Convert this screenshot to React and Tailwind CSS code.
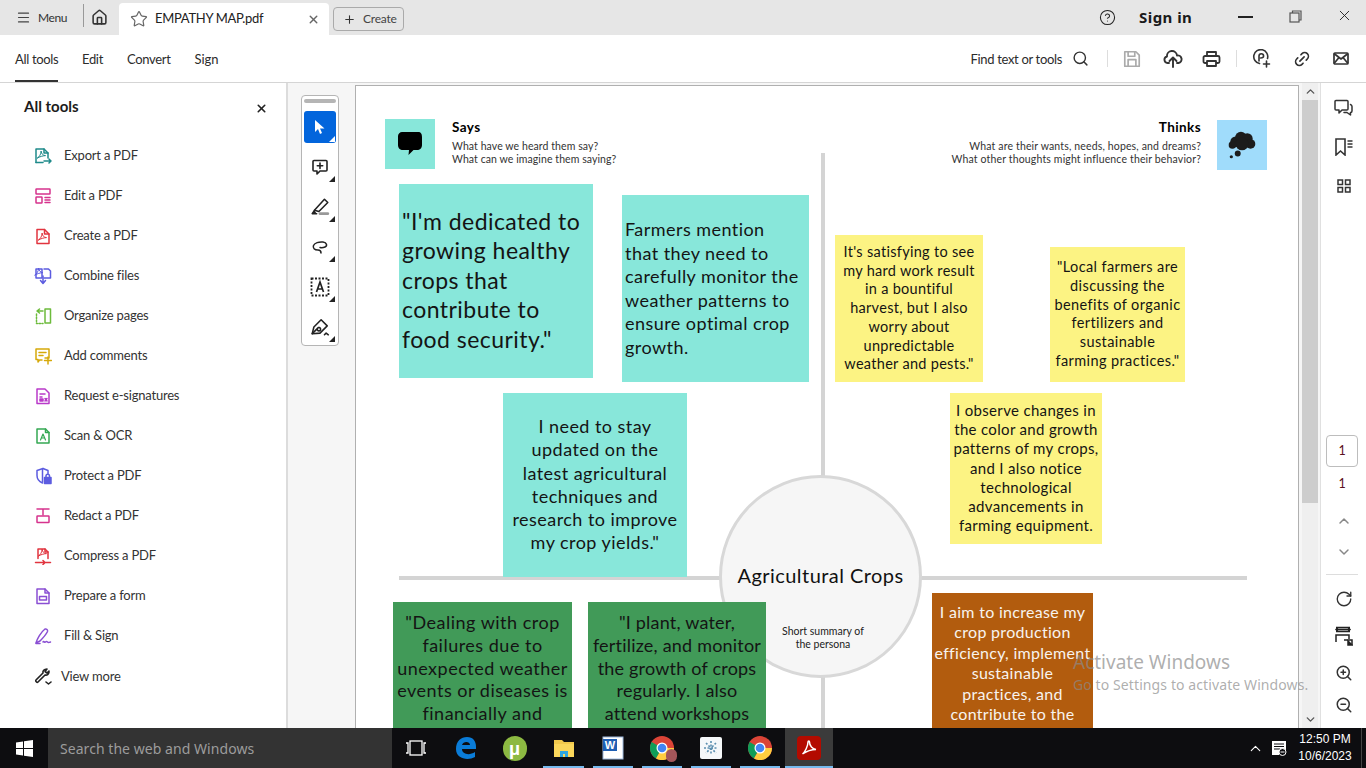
import React from "react";
import { Home, Star, X, Plus, Search, CircleHelp, Link2, ChevronUp, ChevronDown, RotateCw, ZoomIn, ZoomOut, Menu as MenuIcon } from "lucide-react";

const S = ({ c = "#4b4b4b", w = 18, h = 18, vb = "0 0 18 18", sw = 1.5, children, className = "" }) => (
  <svg width={w} height={h} viewBox={vb} fill="none" stroke={c} strokeWidth={sw} strokeLinecap="round" strokeLinejoin="round" className={className}>{children}</svg>
);

const Acro = ({ c, x = 9, y = 9 }) => (
  <path d={`M${x - 4} ${y + 3.5}c2-1 3.5-4 3.6-7 .3 3 2 4.5 4.4 4.6-3 .2-5.500 1-8 2.400z`} stroke={c} strokeWidth="1" />
);

const tools = [
  ["Export a PDF", <S c="#1f8a8a"><path d="M2 15.5V2h8l4 4v5" /><path d="M10 2v4h4M2 15.5h7" /><Acro c="#1f8a8a" x={7.5} y={7.5} /><path d="M10 14h7M15 12l2 2-2 2" /></S>],
  ["Edit a PDF", <S c="#d6338d"><rect x="2" y="2" width="14" height="5" rx=".5" /><rect x="2" y="10" width="6" height="6" rx=".5" /><path d="M11 10.5h5M11 13h5M11 15.5h5" /></S>],
  ["Create a PDF", <S c="#e1343f"><path d="M3 2.5h7.5L15 7v9.5H3z" /><path d="M10.5 2.5V7H15" /><Acro c="#e1343f" x={8.5} y={9.5} /></S>],
  ["Combine files", <S c="#5c5ce0"><path d="M8 11H2V2h6zM10 2h4.500l2 2v7H10" /><Acro c="#5c5ce0" x={5} y={4.5} /><path d="M9 9v7M6.500 13.500 9 16.500l2.500-3" /></S>],
  ["Organize pages", <S c="#6dbb3c"><rect x="11" y="2" width="5.500" height="14" /><path d="M2.500 7v9.500H9" strokeDasharray="1.500 1.500" /><path d="M9 4H3.500M5.500 2 3 4l2.500 2" /></S>],
  ["Add comments", <S c="#d6a90a"><path d="M2 2h13v9h-4M8 13H5.500l-1.500 2v-2.500H2V2" /><path d="M5 5.500h7M5 8.500h4" /><path d="M14 10v7M10.500 13.500h7" /></S>],
  ["Request e-signatures", <S c="#b93ac9"><path d="M3 2h8l4 4v10.500H3z" /><path d="M6 7h5M6 10h2" /><rect x="6" y="12" width="3" height="2" fill="#b93ac9" /><path d="M11 11.500l2 2.500M13 11.500l-2 2.500" /></S>],
  ["Scan & OCR", <S c="#34a853"><path d="M3 2h8.500L15 5.500V16H3z" /><path d="M11.500 2v3.500H15" /><path d="M6.500 13l2.500-6 2.500 6M7.500 11h3" strokeWidth="1.200" /></S>],
  ["Protect a PDF", <S c="#5c5ce0"><path d="M9 1.500 3 3.500v5c0 3.500 2 6 5.500 7.500" /><path d="M9 1.500l5 2v3" /><path d="M8.500 2v13" /><rect x="10.500" y="10.500" width="6.500" height="6" fill="#5c5ce0" /><path d="M12 10.500V9a1.700 1.700 0 0 1 3.500 0v1.500" /></S>],
  ["Redact a PDF", <S c="#d6338d"><path d="M3 2h12M9 2v6" /><rect x="3" y="9" width="12" height="6.500" rx=".5" /></S>],
  ["Compress a PDF", <S c="#e1343f"><path d="M4 11.500V2h7l3 3v6.500" /><path d="M11 2v3h3" /><Acro c="#e1343f" x={8.5} y={5.5} /><path d="M1.500 15.500h15M9 13.500l2 2-2 2" /></S>],
  ["Prepare a form", <S c="#8a4fd3"><path d="M3 2h8l4 4v10.500H3z" /><path d="M11 2v4h4" /><rect x="5.500" y="9.500" width="7" height="3.500" /></S>],
  ["Fill & Sign", <S c="#8a4fd3"><path d="M2 16c1-4 5-11 9-14 1.500-.5 3 1 2.500 2.500-1.500 3-4 6-7.500 9.500z" /><path d="M2 16.500h4M9 15c1-1.500 1.500 1 2.500 0s1-1 2 0 1 .5 3 0" /></S>],
];

const cls = "font-['Lato',sans-serif]";

const Tool = ({ children }) => <div className="flex w-[18px] justify-center">{children}</div>;

function TabBar() {
  return (
    <div className={`flex h-[35px] shrink-0 items-end bg-[#e6e6e6] text-[#333] ${cls}`}>
      <div className="flex h-[35px] w-[83px] items-center pl-4">
        <MenuIcon size={15} strokeWidth={1.900} color="#444" />
        <span className="ml-[7px] text-[12px] tracking-[-0.4px]">Menu</span>
      </div>
      <div className="mb-1 h-[23px] w-px self-center bg-[#999]" />
      <div className="flex h-[35px] w-[35px] items-center justify-start pl-[7px]">
        <Home size={17} strokeWidth={2.200} color="#333" />
      </div>
      <div className="flex h-[32px] w-[210px] items-center rounded-t-[4px] bg-white pl-[11px]">
        <Star size={18} strokeWidth={1.600} color="#666" />
        <span className="ml-[7px] w-[152px] text-[13px] tracking-[-0.3px] text-[#222]">EMPATHY MAP.pdf</span>
        <X size={13} strokeWidth={2.600} color="#666" />
      </div>
      <div className="mb-1 ml-1 flex h-[24px] w-[71px] items-center rounded-[4px] border border-[#aaa] pl-[9px]">
        <Plus size={13} strokeWidth={2} color="#333" />
        <span className="ml-[7px] text-[12px] tracking-[-0.2px] text-[#444]">Create</span>
      </div>
      <div className="flex h-[35px] flex-1 items-center">
        <CircleHelp size={17} strokeWidth={1.500} color="#222" className="ml-[695px]" />
        <span className="ml-[23px] font-['Noto_Sans',sans-serif] text-[15px] font-bold tracking-[0.45px] text-[#1a1a1a]">Sign in</span>
        <div className="ml-[46px] h-[2px] w-[15px] -translate-y-[1px] bg-[#222]" />
        <svg width="13" height="13" viewBox="0 0 13 13" fill="none" stroke="#555" strokeWidth="1.200" className="ml-[36px] -translate-y-[1px]"><rect x="1" y="3" width="9" height="9" /><path d="M3.500 3V1H12v9h-2" /></svg>
        <X size={17} strokeWidth={1.300} color="#222" className="ml-[34px] -translate-y-[2px]" />
      </div>
    </div>
  );
}

function ToolBar() {
  return (
    <div className={`flex h-[48px] shrink-0 items-center border-b border-[#d5d5d5] bg-white text-[13px] tracking-[-0.33px] text-[#2c2c2c] ${cls}`}>
      <div className="relative ml-[15px] flex h-full w-[43px] items-center whitespace-nowrap pt-[2px]">
        All tools
        <div className="absolute bottom-0 left-0 h-[2px] w-[43px] bg-[#333]" />
      </div>
      <span className="ml-6 pt-[2px]">Edit</span>
      <span className="ml-6 pt-[2px]">Convert</span>
      <span className="ml-6 pt-[2px] tracking-[0px]">Sign</span>
      <span className="ml-auto pt-[2px]">Find text or tools</span>
      <Search size={17} strokeWidth={2} color="#333" className="ml-[10px]" />
      <div className="ml-[18px] h-[17px] w-px bg-[#ddd]" />
      <S c="#aaa" w={20} h={20} className="ml-[14px]"><path d="M2.500 2.500h10l3 3v10h-13z" /><path d="M5.500 2.500v4h6v-4M5.500 15.500v-6h7v6" /></S>
      <S c="#333" w={20} h={18} vb="0 0 20 18" sw={1.900} className="ml-[21px]"><path d="M6 13H4.500a3.300 3.300 0 0 1-.5-6.500 5 5 0 0 1 10-1 3.700 3.700 0 0 1 1.500 7.500H14" /><path d="M10 17V8M6.500 11 10 7.500l3.500 3.500" /></S>
      <S c="#333" w={19} h={18} vb="0 0 19 18" sw={1.800} className="ml-[19px]"><path d="M5 6V2h9v4" /><rect x="1.500" y="6" width="16" height="7" rx="1.500" /><rect x="5" y="11" width="9" height="5" fill="white" /></S>
      <div className="ml-[15px] h-[17px] w-px bg-[#ddd]" />
      <S c="#333" w={19} h={19} vb="0 0 19 19" sw={1.600} className="ml-[15px]"><path d="M7.500 14.500a7 7 0 1 1 8-5" /><path d="M7 12V7a2.300 2.300 0 0 1 4.600 0c0 2-3 2-3 2" /><path d="M14.500 12v6M11.500 15h6" /></S>
      <Link2 size={18} strokeWidth={2.200} color="#333" className="ml-[22px] -rotate-45" />
      <svg width="16" height="13" viewBox="0 0 16 13" fill="none" stroke="#333" strokeWidth="1.700" strokeLinejoin="round" className="ml-[22px] mr-[17px]"><rect x="1" y="1" width="14" height="11" rx="1" /><path d="M1 1.500 8 7l7-5.500M1 11.500l5-6M15 11.500l-5-6" /></svg>
    </div>
  );
}

function SidePanel() {
  return (
    <aside className={`flex w-[288px] shrink-0 flex-col border-r-2 border-[#dcdcdc] bg-white text-[13px] tracking-[-0.2px] text-[#333] ${cls}`}>
      <div className="flex h-[53px] items-start justify-between pl-6 pr-[17px] pt-[12px]">
        <span className="text-[15px] font-bold tracking-normal text-[#1c1c1c]">All tools</span>
        <X size={13} strokeWidth={3} color="#222" className="mr-[1px] mt-[7px]" />
      </div>
      <div className="flex flex-col pl-[34px]">
        {tools.map(([t, ic]) => (
          <div key={t} className="flex h-[40px] items-center">
            <Tool>{ic}</Tool>
            <span className="ml-3">{t}</span>
          </div>
        ))}
        <div className="mt-px flex h-[40px] items-center">
          <S c="#222" sw={1.600}><path d="M11 7 4 14c-1 1-3-1-2-2l7-7c-.5-2 1-4 4-4l-2 2.500L13 5l2-2c.5 3-2 4.500-4 4z" /><path d="M12 14l2.500 2L17 14" /></S>
          <span className="ml-[9px]">View more</span>
        </div>
      </div>
    </aside>
  );
}

const Tri = ({ white }) => <div className={`absolute bottom-[1px] right-[1px] h-0 w-0 border-b-[6px] border-l-[6px] border-l-transparent ${white ? "border-b-white" : "border-b-[#222]"}`} />;

function FloatBar() {
  const Btn = ({ children }) => <div className="relative flex h-[32px] w-[32px] items-center justify-center">{children}<Tri /></div>;
  return (
    <div className="absolute left-[13px] top-[12px] flex h-[251px] w-[38px] flex-col items-center gap-2 rounded-[4px] border border-[#b5b5b5] bg-white pt-[3px]">
      <div className="-mb-[1px] h-1 w-8 rounded-sm bg-[#b5b5b5]" />
      <div className="relative mt-[1px] flex h-[32px] w-[32px] items-center justify-center rounded-[3px] bg-[#0265dc]">
        <svg width="12" height="16" viewBox="0 0 12 16" fill="white"><path d="M1 1v12l3-3 2 5 2-1-2-4.500h4.500z" /></svg>
        <Tri white />
      </div>
      <Btn><S c="#222" sw={1.600}><path d="M3 2.500h12a1 1 0 0 1 1 1V12a1 1 0 0 1-1 1H9l-3 3v-3H3a1 1 0 0 1-1-1V3.500a1 1 0 0 1 1-1z" /><path d="M9 5v5.500M6.300 7.700h5.400" /></S></Btn>
      <Btn><S c="#222" w={20} h={20} sw={1.400}><path d="M13 2l3 3-8 8-4-1z" /><path d="M4 12l-2 3h4" fill="#222" /><path d="M9 15h7" stroke="#999" strokeWidth="2.500" /></S></Btn>
      <Btn><S c="#222" sw={1.500}><path d="M10 15c0-2-1-3-3-3C3.500 12 1.500 10 2.500 7.500S8 3.500 12 4s4.500 4 2 5-5 .5-5 .5" /></S></Btn>
      <Btn><svg width="20" height="20" viewBox="0 0 20 20" fill="none"><rect x="1.500" y="1.500" width="17" height="17" stroke="#222" strokeWidth="1.800" strokeDasharray="2 1.500" /><path d="M6.500 15 10 5l3.500 10M7.500 12h5" stroke="#222" strokeWidth="1.700" /></svg></Btn>
      <Btn><S c="#222" w={20} h={20} sw={1.400}><path d="M2 15l1.500-6L10 2.500l5.500 5.500L9 14.500z" /><path d="M8 9.500a1.500 1.500 0 1 0 .1 0M2 15l5-5" /><path d="M13 16l1.500-1.500 2 1.500" /></S></Btn>
    </div>
  );
}

const Note = ({ className, children }) => <div className={`absolute overflow-hidden whitespace-nowrap ${className}`}>{children}</div>;

function Page() {
  return (
    <div className="absolute left-[67px] top-[2px] h-[700px] w-[944px] border border-[#b0b0b0] bg-white font-['Lato',sans-serif] text-[#141414]">
      <div className="absolute left-[29px] top-[33px] flex h-[50px] w-[50px] items-center justify-center bg-[#88e7da]">
        <svg width="28" height="28" viewBox="0 0 28 28" fill="#000"><path d="M6 2h16c3 0 4 2 4 5v8c0 3-2 5-5 5h-3.500l-5 5 .5-5H7c-3 0-5-2-5-5V6c0-2 2-4 4-4z" /></svg>
      </div>
      <div className="absolute left-[96px] top-[34px] text-[13.500px] font-bold leading-[15px] tracking-[0.4px] text-black">Says</div>
      <div className="absolute left-[96px] top-[54px] text-[10.500px] leading-[13px] tracking-[0.08px] text-[#333]">What have we heard them say?<br />What can we imagine them saying?</div>
      <div className="absolute right-[97px] top-[34px] text-[13.500px] font-bold leading-[15px] tracking-[0.4px] text-black">Thinks</div>
      <div className="absolute right-[97px] top-[54px] text-right text-[10.500px] leading-[13px] tracking-[0.15px] text-[#333]">What are their wants, needs, hopes, and dreams?<br />What other thoughts might influence their behavior?</div>
      <div className="absolute left-[861px] top-[34px] flex h-[50px] w-[50px] items-center justify-center bg-[#a0dcfb]">
        <svg width="32" height="32" viewBox="0 0 30 30" fill="#1c1c1c"><circle cx="9" cy="12" r="5" /><circle cx="14" cy="8" r="5.500" /><circle cx="20" cy="9" r="5" /><circle cx="23" cy="14" r="4.500" /><circle cx="15" cy="14" r="6" /><circle cx="6" cy="15" r="3.500" /><circle cx="11" cy="23" r="2.800" /><circle cx="5" cy="26" r="1.500" /></svg>
      </div>

      <div className="absolute left-[465px] top-[67px] h-[323px] w-1 bg-[#d4d4d4]" />
      <div className="absolute left-[465px] top-[534px] h-[120px] w-1 bg-[#d4d4d4]" />
      <div className="absolute left-[43px] top-[490px] h-1 w-[322px] bg-[#d4d4d4]" />
      <div className="absolute left-[565px] top-[490px] h-1 w-[326px] bg-[#d4d4d4]" />

      <div className="absolute left-[363px] top-[389px] flex h-[203px] w-[203px] flex-col items-center rounded-full border-[3px] border-[#d8d8d8] bg-[#f6f6f6]">
        <div className="mt-[85px] text-[20px] leading-[24px] tracking-[0.45px] text-[#111]">Agricultural Crops</div>
        <div className="ml-[5px] mt-[38px] text-center text-[10.500px] leading-[13px] text-[#222]">Short summary of<br />the persona</div>
      </div>

      <Note className="left-[43px] top-[98px] h-[194px] w-[194px] bg-[#88e7da] pl-[3px] pt-[23px] text-[23px] leading-[29.400px] tracking-[0.45px]">"I'm dedicated to<br />growing healthy<br />crops that<br />contribute to<br />food security."</Note>
      <Note className="left-[266px] top-[109px] h-[187px] w-[187px] bg-[#88e7da] pl-[3px] pt-[23px] text-[18px] leading-[23.600px] tracking-[0.45px]">Farmers mention<br />that they need to<br />carefully monitor the<br />weather patterns to<br />ensure optimal crop<br />growth.</Note>
      <Note className="left-[147px] top-[307px] h-[184px] w-[184px] bg-[#88e7da] pt-[22px] text-center text-[18px] leading-[23.300px] tracking-[0.45px]">I need to stay<br />updated on the<br />latest agricultural<br />techniques and<br />research to improve<br />my crop yields."</Note>
      <Note className="left-[479px] top-[149px] h-[147px] w-[148px] bg-[#fcf383] pt-[8px] text-center text-[14.500px] leading-[18.700px] tracking-[0.3px]">It's satisfying to see<br />my hard work result<br />in a bountiful<br />harvest, but I also<br />worry about<br />unpredictable<br />weather and pests."</Note>
      <Note className="left-[694px] top-[161px] h-[135px] w-[135px] bg-[#fcf383] pt-[11px] text-center text-[14.500px] leading-[18.800px] tracking-[0.4px]">"Local farmers are<br />discussing the<br />benefits of organic<br />fertilizers and<br />sustainable<br />farming practices."</Note>
      <Note className="left-[594px] top-[307px] h-[151px] w-[152px] bg-[#fcf383] pt-[8px] text-center text-[15px] leading-[19.200px] tracking-[0.33px]">I observe changes in<br />the color and growth<br />patterns of my crops,<br />and I also notice<br />technological<br />advancements in<br />farming equipment.</Note>
      <Note className="left-[37px] top-[516px] h-[184px] w-[179px] bg-[#419a58] pt-[9px] text-center text-[18px] leading-[22.800px] tracking-[0.5px]">"Dealing with crop<br />failures due to<br />unexpected weather<br />events or diseases is<br />financially and</Note>
      <Note className="left-[232px] top-[516px] h-[184px] w-[178px] bg-[#419a58] pt-[9px] text-center text-[18px] leading-[22.800px] tracking-[0.2px]">"I plant, water,<br />fertilize, and monitor<br />the growth of crops<br />regularly. I also<br />attend workshops</Note>
      <Note className="left-[576px] top-[507px] h-[190px] w-[161px] bg-[#b25c0e] pt-[9px] text-center text-[16px] leading-[20.400px] tracking-[0.3px] text-[#f8f3ee]">I aim to increase my<br />crop production<br />efficiency, implement<br />sustainable<br />practices, and<br />contribute to the</Note>
    </div>
  );
}

function Scrollbar() {
  return (
    <div className="absolute bottom-0 left-[1014px] top-0 flex w-[16px] flex-col items-center bg-[#efefef]">
      <div className="flex h-[17px] items-center"><ChevronUp size={13} strokeWidth={2.500} color="#555" /></div>
      <div className="h-[403px] w-full bg-[#cdcdcd]" />
      <div className="mt-auto flex h-[17px] items-center"><ChevronDown size={13} strokeWidth={2.500} color="#555" /></div>
    </div>
  );
}

function Rail() {
  return (
    <div className={`flex w-[46px] shrink-0 flex-col items-center border-l border-[#e0e0e0] bg-white pt-[16px] ${cls}`}>
      <S c="#333" w={19} h={18} vb="0 0 19 18" sw={1.500}><path d="M2 1.500h11a1 1 0 0 1 1 1V10a1 1 0 0 1-1 1H8l-3 3v-3H2a1 1 0 0 1-1-1V2.500a1 1 0 0 1 1-1z" /><path d="M16.500 5.500c1 .5 1.500 1 1.500 2V12c0 1-.5 1.500-1.500 1.500V16L13 13.500h-3" /></S>
      <svg width="19" height="18" viewBox="0 0 19 18" fill="none" stroke="#333" strokeWidth="1.600" className="mt-[21px]"><path d="M2 1h9v16l-4.500-4L2 17z" /><path d="M13.500 3h5M13.500 6h5M13.500 9h5" /></svg>
      <svg width="14" height="14" viewBox="0 0 14 14" fill="none" stroke="#333" strokeWidth="1.500" className="mt-[23px]"><rect x="1" y="1" width="4.500" height="4.500" /><rect x="8.500" y="1" width="4.500" height="4.500" /><rect x="1" y="8.500" width="4.500" height="4.500" /><rect x="8.500" y="8.500" width="4.500" height="4.500" /></svg>
      <div className="mr-[3px] mt-[242px] flex h-[32px] w-[32px] items-center justify-center rounded-[4px] border border-[#bdbdbd] text-[12.500px] text-[#5a1020]">1</div>
      <div className="mr-[3px] mt-[8px] h-[18px] text-[12.500px] leading-[18px] text-[#5a1020]">1</div>
      <ChevronUp size={16} strokeWidth={2.200} color="#888" className="mt-[20px]" />
      <ChevronDown size={16} strokeWidth={2.200} color="#888" className="mt-[15px]" />
      <div className="mr-[3px] mt-[14px] h-px w-[32px] bg-[#ddd]" />
      <RotateCw size={18} strokeWidth={1.800} color="#333" className="mt-[15px]" />
      <svg width="18" height="20" viewBox="0 0 18 20" fill="none" stroke="#222" strokeWidth="1.500" className="mt-[18px]"><path d="M1 1.500h14M1 5.500h14M1 3.500h14M3 1.500 1 3.500l2 2M13 1.500l2 2-2 2" /><path d="M1 16V9h13v4" /><path d="M9 14h8v5" /><path d="M17 19l-4-4v4z" fill="#222" /></svg>
      <ZoomIn size={18} strokeWidth={2} color="#333" className="mt-[18px]" />
      <ZoomOut size={18} strokeWidth={2} color="#333" className="mt-[14px]" />
    </div>
  );
}

const Under = ({ w = "w-[40px]", ml = "ml-[9px]", children, active }) => (
  <div className={`relative flex h-full items-center justify-center ${w} ${ml} ${active ? "bg-[#3b3b3b]" : ""}`}>
    {children}
    <div className="absolute bottom-0 left-0 right-0 h-[2px] bg-[#76b9ed]" />
  </div>
);

const Chrome = ({ s = 24 }) => (
  <svg width={s} height={s} viewBox="0 0 24 24">
    <circle cx="12" cy="12" r="12" fill="#db4437" />
    <path d="M12 12 1.600 6A12 12 0 0 0 6 22.400L12 12z" fill="#0f9d58" />
    <path d="M12 12 6 22.400A12 12 0 0 0 24 12z" fill="#ffcd40" />
    <circle cx="12" cy="12" r="5.500" fill="#fff" />
    <circle cx="12" cy="12" r="4.300" fill="#4285f4" />
  </svg>
);

function Taskbar() {
  return (
    <div className="flex h-[40px] shrink-0 items-center bg-[#0d0d10] font-['Noto_Sans',sans-serif] text-white">
      <div className="flex w-[48px] justify-center">
        <svg width="17" height="17" viewBox="0 0 17 17" fill="#fff"><path d="M0 2.500 7 1.500v6.500H0zM8 1.300 17 0v8H8zM0 9h7v6.500L0 14.500zM8 9h9v8l-9-1.300z" /></svg>
      </div>
      <div className="flex h-full w-[344px] items-center bg-[#333333] pl-3 text-[14px] tracking-[0.05px] text-[#9c9c9c]">Search the web and Windows</div>
      <div className="flex w-[48px] justify-center">
        <svg width="22" height="16" viewBox="0 0 22 16" fill="none" stroke="#fff" strokeWidth="1.300"><rect x="5" y="1" width="12" height="14" /><path d="M1 3h2v10H1M21 3h-2v10h2" /></svg>
      </div>
      <div className="flex w-[49px] justify-center pl-[2px]">
        <svg width="22" height="24" viewBox="0 0 22 24" fill="none"><path d="M1 13C1 5 6 1 12 1c6 0 9 4 9 10v2H7c0 5 7 7 13 3v5c-7 4-19 2-19-8zM7 9h8c0-4-7-4-8 0z" fill="#0a7cd8" /></svg>
      </div>
      <div className="flex w-[49px] justify-center pl-[2px]">
        <div className="flex h-[25px] w-[24px] items-center justify-center rounded-full bg-[#8cb942] text-[17px] font-bold leading-none text-white">µ</div>
      </div>
      <div className="flex h-full flex-1 items-center">
        <Under w="w-[41px]" ml="ml-[5px]">
          <svg width="22" height="22" viewBox="0 0 22 22"><path d="M1 3h8l2 2h10v15H1z" fill="#f2c94c" /><rect x="1" y="7" width="20" height="13" fill="#fbd75b" /><path d="M7 20v-6h8v6h-3v-3h-2v3z" fill="#2fa6e0" /></svg>
        </Under>
        <Under>
          <svg width="24" height="24" viewBox="0 0 24 24"><rect x="2" y="1" width="20" height="22" fill="#fff" stroke="#9db8dc" /><rect x="2" y="3" width="14" height="12" fill="#1f5fb4" /><text x="9" y="13" textAnchor="middle" fontSize="11" fontWeight="700" fill="#fff" fontFamily="Liberation Sans">W</text></svg>
        </Under>
        <Under>
          <div className="relative"><Chrome /><div className="absolute -bottom-[2px] -right-[3px] h-[13px] w-[11px] rounded-full bg-[#a4565a]" /></div>
        </Under>
        <Under>
          <svg width="24" height="24" viewBox="0 0 24 24"><rect x="1" y="1" width="22" height="22" rx="2" fill="#f5f8fa" /><path d="M12 5v14M5 12h14M7 7l10 10M17 7 7 17" stroke="#5c8fb0" strokeWidth="1.600" strokeDasharray="2 1.500" /></svg>
        </Under>
        <Under><Chrome /></Under>
        <Under w="w-[48px]" ml="ml-[5px]" active>
          <div className="flex h-[24px] w-[24px] items-center justify-center rounded-[4px] bg-[#b30b00]">
            <svg width="16" height="16" viewBox="0 0 16 16" fill="none" stroke="#fff" strokeWidth="1.500"><path d="M1.500 14C4 12 7 6 7 2c0-1.500 1.500-1.500 1.500 0 0 4 3 7 6.500 7.500-4 0-9 1.500-13.500 4.500z" /></svg>
          </div>
        </Under>
      </div>
      <ChevronUp size={17} strokeWidth={1.500} color="#fff" className="mr-[7px]" />
      <svg width="16" height="16" viewBox="0 0 16 16" className="mr-[6px]"><path d="M1 1h14v10H8v4H1z" fill="#fff" /><path d="M3 4h10M3 6.500h10M3 9h6" stroke="#0d0d10" /><circle cx="11.500" cy="12" r="3.500" fill="#0d0d10" stroke="#fff" /><path d="M9.500 12h4" stroke="#fff" /></svg>
      <div className="mr-[4px] w-[64px] text-center font-['Liberation_Sans',sans-serif] text-[12px] leading-[17px]">12:50 PM<br />10/6/2023</div>
      <div className="h-full w-px bg-[#444]" />
      <div className="w-[4px]" />
    </div>
  );
}

export default function App() {
  return (
    <div className="relative flex h-[768px] w-[1366px] flex-col overflow-hidden bg-white">
      <TabBar />
      <ToolBar />
      <div className="flex min-h-0 flex-1">
        <SidePanel />
        <div className="relative flex-1 overflow-hidden bg-[#f6f6f6]">
          <FloatBar />
          <Page />
          <Scrollbar />
        </div>
        <Rail />
      </div>
      <Taskbar />
      <div className="absolute left-[1073px] top-[649px] font-['Noto_Sans',sans-serif] text-[#8b8b8b]/70">
        <div className="text-[19px] leading-[26px]">Activate Windows</div>
        <div className="text-[14px] leading-[20px] tracking-[0.1px]">Go to Settings to activate Windows.</div>
      </div>
    </div>
  );
}
